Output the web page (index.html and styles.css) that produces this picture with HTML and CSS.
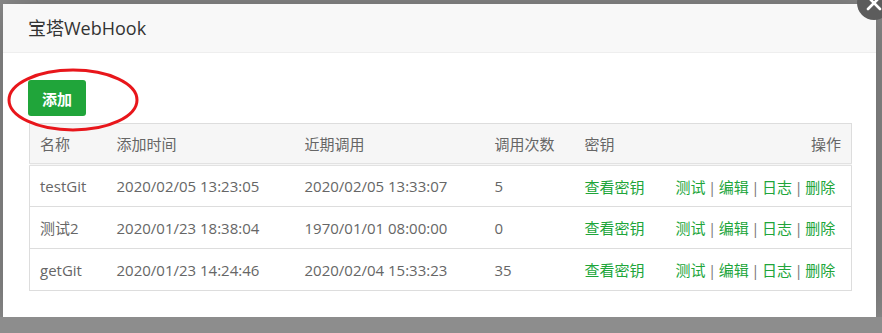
FILE: index.html
```html
<!DOCTYPE html>
<html lang="zh-CN">
<head>
    <meta charset="UTF-8">
    <title>宝塔WebHook</title>
    <link rel="stylesheet" href="styles.css">
</head>
<body>
    <div class="layer">
        <div class="layer-title">宝塔WebHook</div>
        <a class="layer-close" href="#" aria-label="关闭">
            <svg width="34" height="34" viewBox="0 0 34 34" aria-hidden="true">
                <circle cx="17" cy="17" r="17" fill="#5c5c5c"/>
                <path d="M11 11 L23 23 M23 11 L11 23" stroke="#fff" stroke-width="2.6" stroke-linecap="round"/>
            </svg>
        </a>

        <div class="layer-content">
            <div class="toolbar">
                <button class="btn btn-success">添加</button>
                <!-- hand-drawn highlight round the add button -->
                <svg class="mark" width="136" height="68" viewBox="0 0 136 68" aria-hidden="true">
                    <ellipse cx="68" cy="34" rx="64" ry="30" fill="none" stroke="#e8161b" stroke-width="3"/>
                </svg>
            </div>

            <table class="table">
                <thead>
                    <tr>
                        <th class="c-name">名称</th>
                        <th class="c-added">添加时间</th>
                        <th class="c-called">近期调用</th>
                        <th class="c-count">调用次数</th>
                        <th class="c-key">密钥</th>
                        <th class="c-ops">操作</th>
                    </tr>
                </thead>
                <tbody>
                    <tr>
                        <td>testGit</td>
                        <td>2020/02/05 13:23:05</td>
                        <td>2020/02/05 13:33:07</td>
                        <td>5</td>
                        <td><a class="link" href="#">查看密钥</a></td>
                        <td class="c-ops"><a class="link" href="#">测试</a> | <a class="link" href="#">编辑</a> | <a class="link" href="#">日志</a> | <a class="link" href="#">删除</a></td>
                    </tr>
                    <tr>
                        <td>测试2</td>
                        <td>2020/01/23 18:38:04</td>
                        <td>1970/01/01 08:00:00</td>
                        <td>0</td>
                        <td><a class="link" href="#">查看密钥</a></td>
                        <td class="c-ops"><a class="link" href="#">测试</a> | <a class="link" href="#">编辑</a> | <a class="link" href="#">日志</a> | <a class="link" href="#">删除</a></td>
                    </tr>
                    <tr>
                        <td>getGit</td>
                        <td>2020/01/23 14:24:46</td>
                        <td>2020/02/04 15:33:23</td>
                        <td>35</td>
                        <td><a class="link" href="#">查看密钥</a></td>
                        <td class="c-ops"><a class="link" href="#">测试</a> | <a class="link" href="#">编辑</a> | <a class="link" href="#">日志</a> | <a class="link" href="#">删除</a></td>
                    </tr>
                </tbody>
            </table>
        </div>
    </div>
</body>
</html>
```

FILE: styles.css
```css
* {
    margin: 0;
    padding: 0;
    box-sizing: border-box;
}

body {
    font-family: "Open Sans", "Noto Sans CJK SC", sans-serif;
    background-color: #8d8d8d;
    padding: 4px 6px 0 3px;
    overflow: hidden;
}

/* modal window */
.layer {
    position: relative;
    width: 873px;
    height: 313px;
    background-color: #fff;
    box-shadow: 1px 1px 40px rgba(0, 0, 0, 0.3);
}

.layer-title {
    height: 49px;
    line-height: 48px;
    padding-left: 25px;
    font-size: 18px;
    color: #333;
    background-color: #f8f8f8;
    border-bottom: 1px solid #eee;
}

.layer-close {
    position: absolute;
    top: -18px;
    right: -15px;
    width: 34px;
    height: 34px;
    display: block;
}

.layer-content {
    padding: 27px 24px 0 25px;
}

.toolbar {
    position: relative;
    height: 43px;
}

.mark {
    position: absolute;
    left: -23px;
    top: -14px;
    pointer-events: none;
}

.btn {
    border: none;
    border-radius: 3px;
    font-family: inherit;
    font-size: 15px;
    height: 36px;
    padding: 0 14px;
    cursor: pointer;
}

.btn-success {
    background-color: #20a53a;
    color: #fff;
    font-weight: 600;
}

/* list table */
.table {
    width: 823px;
    margin-left: 1px;
    table-layout: fixed;
    border-collapse: collapse;
    border: 1px solid #ddd;
    font-size: 15px;
    color: #666;
}

.table th {
    text-align: left;
    font-weight: normal;
    background-color: #f6f6f6;
    height: 41px;
    padding: 0 10px;
    border-bottom: 3px double #e2e2e2;
}

.table td {
    height: 42px;
    padding: 0 10px;
    border-top: 1px solid #ddd;
    white-space: nowrap;
}

.c-name { width: 77px; }
.c-added { width: 188px; }
.c-called { width: 190px; }
.c-count { width: 90px; }
.c-key { width: 90px; }

.table th.c-ops {
    text-align: right;
}

.table td.c-ops {
    padding-left: 11px;
    word-spacing: -1.4px;
    color: #777;
}

.link {
    color: #20a53a;
    text-decoration: none;
}
```
